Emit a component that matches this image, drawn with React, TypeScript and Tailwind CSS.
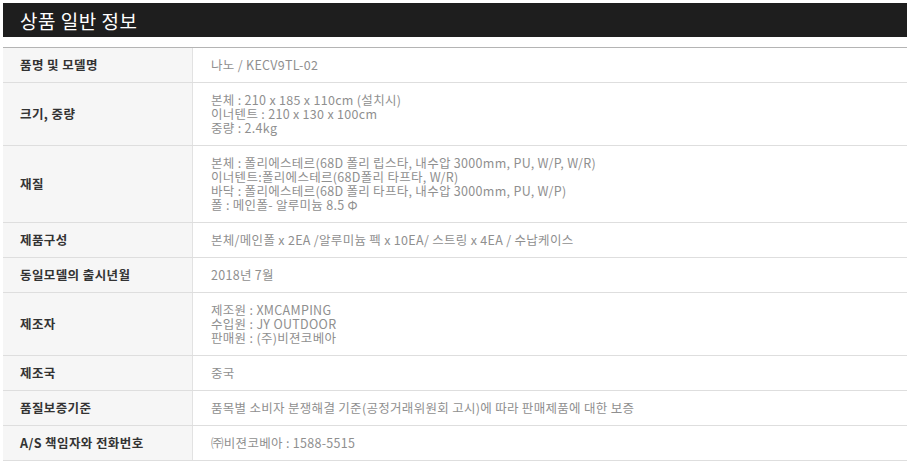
import React from 'react';

const rows: { label: string; lines: string[] }[] = [
  { label: '품명 및 모델명', lines: ['나노 / KECV9TL-02'] },
  {
    label: '크기, 중량',
    lines: ['본체 : 210 x 185 x 110cm (설치시)', '이너텐트 : 210 x 130 x 100cm', '중량 : 2.4kg'],
  },
  {
    label: '재질',
    lines: [
      '본체 : 폴리에스테르(68D 폴리 립스타, 내수압 3000mm, PU, W/P, W/R)',
      '이너텐트:폴리에스테르(68D폴리 타프타, W/R)',
      '바닥 : 폴리에스테르(68D 폴리 타프타, 내수압 3000mm, PU, W/P)',
      '폴 : 메인폴- 알루미늄 8.5 Φ',
    ],
  },
  { label: '제품구성', lines: ['본체/메인폴 x 2EA /알루미늄 펙 x 10EA/ 스트링 x 4EA / 수납케이스'] },
  { label: '동일모델의 출시년월', lines: ['2018년 7월'] },
  { label: '제조자', lines: ['제조원 : XMCAMPING', '수입원 : JY OUTDOOR', '판매원 : (주)비젼코베아'] },
  { label: '제조국', lines: ['중국'] },
  { label: '품질보증기준', lines: ['품목별 소비자 분쟁해결 기준(공정거래위원회 고시)에 따라 판매제품에 대한 보증'] },
  { label: 'A/S 책임자와 전화번호', lines: ['㈜비젼코베아 : 1588-5515'] },
];

export default function App() {
  return (
    <div className="w-[911px] h-[468px] bg-white pt-[3px] pl-[3px] font-['Noto_Sans_CJK_KR','Noto_Sans',sans-serif]">
      <div className="w-[904px]">
        <div className="h-[34px] bg-[#1e1e1e] flex items-center pl-[17px]">
          <h2 className="text-white text-[19px] leading-none tracking-[0.5px]">상품 일반 정보</h2>
        </div>
        <div className="mt-[10px] border-t border-[#b4b4b4]">
          {rows.map((row) => (
            <div key={row.label} className="flex border-b border-[#dedede]">
              <div className="w-[190px] shrink-0 bg-[#f6f6f6] border-r border-[#e2e2e2] flex items-center pl-[17px] text-[12.5px] tracking-[0.4px] font-bold text-[#333]">
                {row.label}
              </div>
              <div className="flex-1 py-[10px] pl-[18px] text-[12.5px] tracking-[0.3px] leading-[14px] text-[#8f8f8f]">
                {row.lines.map((line) => (
                  <div key={line}>{line}</div>
                ))}
              </div>
            </div>
          ))}
        </div>
      </div>
    </div>
  );
}
